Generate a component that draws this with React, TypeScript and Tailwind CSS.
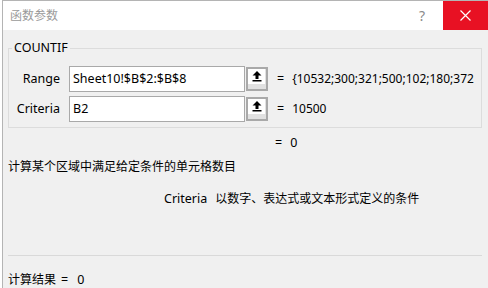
import React from "react";

const font = { fontFamily: '"Noto Sans", "Noto Sans CJK SC", sans-serif' };

function UpBtn() {
  return (
    <div className="ml-[1px] mt-[1px] flex h-[24px] w-[22px] flex-col border-2 border-[#a9a9a9] bg-[#e1e1e1]">
      <div className="flex h-[15px] w-[17px] items-center justify-center bg-white">
        <svg width="10" height="11" viewBox="0 0 10 11">
          <path d="M5 0 L9.5 4.5 L6.5 4.5 L6.5 8 L3.5 8 L3.5 4.5 L0.5 4.5 Z" fill="#000" />
          <rect x="0.5" y="9" width="9" height="1.5" fill="#000" />
        </svg>
      </div>
    </div>
  );
}

function Row({ label, value, result }: { label: string; value: string; result: string }) {
  return (
    <div className="flex h-[26px] items-start">
      <div className="flex h-[26px] w-[51px] items-center justify-end text-[12.5px]">{label}</div>
      <div className="ml-[9px] flex h-[26px] w-[176px] items-center border border-[#a9a9a9] bg-white pl-[3px] text-[12.5px]">
        {value}
      </div>
      <UpBtn />
      <div className="ml-[9px] flex h-[26px] items-center text-[12.5px]">=</div>
      <div className="ml-[8px] flex h-[26px] w-[184px] items-center overflow-hidden whitespace-nowrap text-[12px]">
        {result}
      </div>
    </div>
  );
}

export default function App() {
  return (
    <div className="h-[288px] w-[488px] overflow-hidden bg-white" style={font}>
      <div className="ml-[2px] flex h-[288px] flex-col border-l border-t border-[#b4b4b4] bg-[#f0f0f0] text-black">
        <div className="flex h-[29px] items-center bg-white">
          <div className="pl-[7px] text-[12px] text-[#9a9a9a]">函数参数</div>
          <div className="flex-1" />
          <div className="mr-[18px] text-[14px] text-[#8a8a8a]">?</div>
          <div className="flex h-[29px] w-[45px] items-center justify-center bg-[#e81123]">
            <svg width="11" height="11" viewBox="0 0 11 11">
              <path d="M0.5 0.5 L10.5 10.5 M10.5 0.5 L0.5 10.5" stroke="#fff" strokeWidth="1.2" />
            </svg>
          </div>
        </div>

        <fieldset className="ml-[5px] mt-[10px] w-[474px] border border-[#dcdcdc] pb-[5px]">
          <legend className="ml-[3px] px-[2px] text-[12.5px] leading-[16px]">COUNTIF</legend>
          <div className="mt-[10px] flex flex-col gap-[4px]">
            <Row label="Range" value="Sheet10!$B$2:$B$8" result="{10532;300;321;500;102;180;372" />
            <Row label="Criteria" value="B2" result="10500" />
          </div>
        </fieldset>

        <div className="ml-[272px] mt-[7px] flex h-[16px] items-center text-[12.5px] leading-[16px]">
          <span>=</span>
          <span className="ml-[8px]">0</span>
        </div>
        <div className="ml-[5px] mt-[8px] h-[16px] text-[12px] leading-[16px]">计算某个区域中满足给定条件的单元格数目</div>
        <div className="ml-[161px] mt-[16px] flex h-[16px] items-center text-[12px] leading-[16px]">
          <span className="text-[12.5px]">Criteria</span>
          <span className="ml-[8px]">以数字、表达式或文本形式定义的条件</span>
        </div>
        <div className="ml-[5px] mt-[48px] h-px w-[474px] bg-[#d9d9d9]" />
        <div className="ml-[5px] mt-[16px] flex h-[16px] items-center text-[12px] leading-[16px]">
          <span>计算结果</span>
          <span className="ml-[5px] text-[12.5px]">=</span>
          <span className="ml-[9px] text-[12.5px]">0</span>
        </div>
      </div>
    </div>
  );
}
